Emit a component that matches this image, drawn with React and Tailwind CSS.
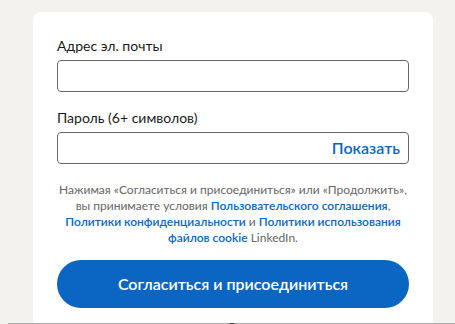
export default function App() {
    return (
        <div className="h-[324px] overflow-hidden bg-[#f3f2ef] flex flex-col font-['Lato',sans-serif]">
            <div className="flex-1 min-h-0 pt-3 px-[33px] overflow-hidden">
                <div className="w-[400px] h-full bg-white rounded-t-lg px-6 pt-6">
                    <label className="block text-[14px] leading-5 text-[#191919]">Адрес эл. почты</label>
                    <div className="mt-1 h-8 border border-[#666] rounded" />

                    <label className="block mt-4 text-[14px] leading-5 text-[#191919]">Пароль (6+ символов)</label>
                    <div className="mt-1 h-8 border border-[#666] rounded flex items-center justify-end pr-2">
                        <span className="text-[16px] font-semibold text-[#0a66c2]">Показать</span>
                    </div>

                    <p className="mt-[18px] text-center text-[12px] leading-4 text-[#666]">
                        Нажимая «Согласиться и присоединиться» или «Продолжить»,
                        <br />
                        вы принимаете условия{" "}
                        <span className="font-semibold text-[#0a66c2]">Пользовательского соглашения</span>,
                        <br />
                        <span className="font-semibold text-[#0a66c2]">Политики конфиденциальности</span> и{" "}
                        <span className="font-semibold text-[#0a66c2]">Политики использования</span>
                        <br />
                        <span className="font-semibold text-[#0a66c2]">файлов cookie</span> LinkedIn.
                    </p>

                    <button className="mt-[14px] w-full h-12 rounded-full bg-[#0a66c2] text-white text-[16px] font-semibold">
                        Согласиться и присоединиться
                    </button>
                </div>
            </div>
            <div className="ml-2 h-px bg-[#a8a8a8] flex justify-center">
                <div className="w-1 h-px bg-[#444]" />
            </div>
        </div>
    )
}
